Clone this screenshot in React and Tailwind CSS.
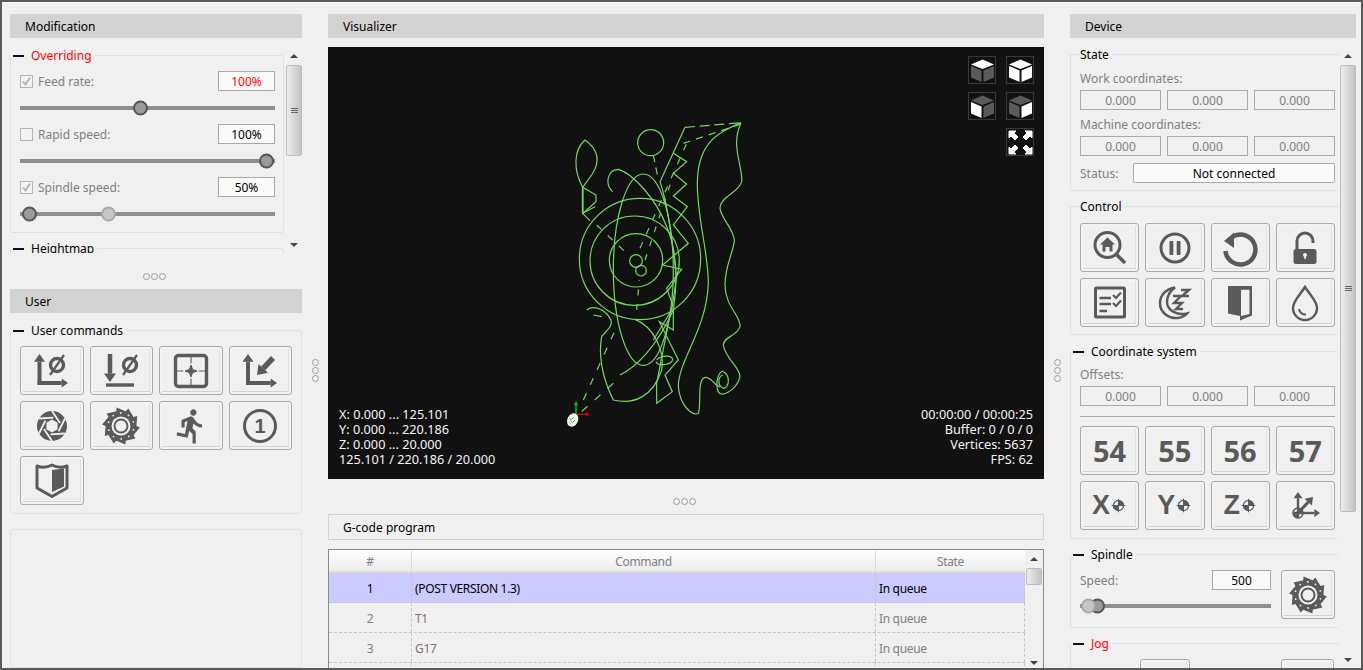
import React from 'react'
import { MdDirectionsRun } from 'react-icons/md'

const G = '#5a5a5a'

// little svg wrapper, 40x40 box centred in the button
const Ic = ({ children }) => (
  <svg width="40" height="40" viewBox="0 0 40 40" fill="none">{children}</svg>
)

const Arrow = ({ x1, y1, x2, y2, w = 4, head = 5.5 }) => {
  const a = Math.atan2(y2 - y1, x2 - x1)
  const bx = x2 - Math.cos(a) * head * 1.4
  const by = y2 - Math.sin(a) * head * 1.4
  const px = -Math.sin(a) * head
  const py = Math.cos(a) * head
  return (
    <g>
      <line x1={x1} y1={y1} x2={bx} y2={by} stroke={G} strokeWidth={w} />
      <polygon points={`${x2},${y2} ${bx + px},${by + py} ${bx - px},${by - py}`} fill={G} />
    </g>
  )
}

const Zero = ({ x, y }) => (
  <g stroke={G} strokeWidth="3.4">
    <circle cx={x} cy={y} r="6.5" />
    <line x1={x - 7} y1={y + 10} x2={x + 7} y2={y - 10} strokeWidth="2.2" />
  </g>
)

const sawPath = () => {
  let d = ''
  for (let i = 0; i < 10; i++) {
    const a = (i * Math.PI) / 5
    const b = a + Math.PI / 5
    const p = (r, t) => `${(20 + r * Math.cos(t)).toFixed(1)} ${(20 + r * Math.sin(t)).toFixed(1)}`
    d += `${i === 0 ? 'M' : 'L'}${p(15.5, a)} L${p(19, a + 0.08)} L${p(15.5, b - 0.05)} `
  }
  return d + 'Z'
}

const Saw = () => (
  <Ic>
    <path d={sawPath()} fill={G} />
    <circle cx="20" cy="20" r="9.5" fill="#f0f0f0" />
    <circle cx="20" cy="20" r="6.5" stroke={G} strokeWidth="2" />
    {[0, 1, 2, 3, 4, 5, 6, 7, 8, 9].map(i => (
      <circle key={i} cx={20 + 13 * Math.cos((i * Math.PI) / 5 + 0.3)} cy={20 + 13 * Math.sin((i * Math.PI) / 5 + 0.3)} r="0.9" fill="#f0f0f0" />
    ))}
  </Ic>
)

const Aperture = () => (
  <Ic>
    <circle cx="20" cy="20" r="15" fill={G} />
    {[0, 60, 120, 180, 240, 300].map(a => (
      <line key={a} x1="20" y1="5" x2="28" y2="17" stroke="#f0f0f0" strokeWidth="1.8" transform={`rotate(${a} 20 20)`} />
    ))}
    <polygon points="20,13.5 25.6,16.7 25.6,23.3 20,26.5 14.4,23.3 14.4,16.7" fill="#f0f0f0" />
  </Ic>
)

const Target = ({ x = 20, y = 20, r = 5 }) => (
  <g>
    <circle cx={x} cy={y} r={r} stroke={G} strokeWidth="1.5" />
    <path d={`M${x} ${y - r} A${r} ${r} 0 0 1 ${x + r} ${y} L${x} ${y} Z M${x} ${y + r} A${r} ${r} 0 0 1 ${x - r} ${y} L${x} ${y} Z`} fill={G} />
    <path d={`M${x - r - 2} ${y} H${x + r + 2} M${x} ${y - r - 2} V${y + r + 2}`} stroke={G} strokeWidth="1.2" />
  </g>
)

const icons = {
  up0: <Ic><Arrow x1={7.5} y1={34} x2={7.5} y2={3} /><Arrow x1={5.5} y1={32} x2={36} y2={32} head={4.5} /><Zero x={25} y={14} /></Ic>,
  down0: <Ic><Arrow x1={9} y1={3} x2={9} y2={31} w={4.5} head={6} /><line x1="5" y1="34" x2="33" y2="34" stroke={G} strokeWidth="3.4" /><Zero x={29} y={14} /></Ic>,
  center: (
    <Ic>
      <rect x="4.5" y="4.5" width="31" height="31" rx="3" stroke={G} strokeWidth="3.4" />
      <path d="M20 5V12.5M20 27.5V35M5 20H12.5M27.5 20H35" stroke={G} strokeWidth="1.1" />
      <polygon points="20,14 21.6,18.4 26,20 21.6,21.6 20,26 18.4,21.6 14,20 18.4,18.4" fill={G} stroke={G} strokeWidth="1" />
    </Ic>
  ),
  axesDiag: <Ic><Arrow x1={8} y1={34} x2={8} y2={3} /><Arrow x1={6} y1={32} x2={37} y2={32} head={4.5} /><Arrow x1={33} y1={7} x2={17} y2={24} w={5.5} head={6.5} /></Ic>,
  aperture: <Aperture />,
  saw: <Saw />,
  run: <MdDirectionsRun size={38} color={G} />,
  one: (
    <Ic>
      <circle cx="20" cy="20" r="15.5" stroke={G} strokeWidth="3" />
      <text x="20" y="27" textAnchor="middle" fontSize="20" fontWeight="700" fontFamily="Liberation Sans" fill={G}>1</text>
    </Ic>
  ),
  shield: (
    <Ic>
      <path d="M5 5Q13 8 20 4Q27 8 35 5V27L20 35.5L5 27Z" stroke={G} strokeWidth="3" strokeLinejoin="round" />
      <path d="M20 9L32 7.5V25.5L20 31Z" fill={G} />
    </Ic>
  ),
  home: (
    <Ic>
      <circle cx="17.5" cy="17" r="12.5" stroke={G} strokeWidth="3" />
      <line x1="27" y1="27" x2="35" y2="35" stroke={G} strokeWidth="3.5" />
      <path d="M17.5 9.5L25 16.5H22.5V23.5H19.5V19H15.5V23.5H12.5V16.5H10Z" fill={G} />
    </Ic>
  ),
  pause: (
    <Ic>
      <circle cx="20" cy="20" r="14" stroke={G} strokeWidth="3" />
      <rect x="14.5" y="13" width="3.8" height="14" rx="1" fill={G} />
      <rect x="21.7" y="13" width="3.8" height="14" rx="1" fill={G} />
    </Ic>
  ),
  reset: (
    <Ic>
      <path d="M13 8.5A15 15 0 1 1 5.5 23" stroke={G} strokeWidth="4.5" />
      <polygon points="4,13 14,4.5 14,20" fill={G} />
    </Ic>
  ),
  lock: (
    <Ic>
      <path d="M12 21V13A8 8 0 0 1 28 13V15" stroke={G} strokeWidth="3" />
      <rect x="8.5" y="21" width="23" height="15" rx="2.5" fill={G} />
      <circle cx="20" cy="27" r="2" fill="#f0f0f0" />
      <rect x="19.2" y="27" width="1.6" height="4" fill="#f0f0f0" />
    </Ic>
  ),
  check: (
    <Ic>
      <rect x="5.5" y="5" width="29" height="29" rx="1" stroke={G} strokeWidth="3" />
      <path d="M9.5 15H21M9.5 21H21M9.5 28H17" stroke={G} strokeWidth="2.4" />
      <path d="M23 12L26 15L31 9.5M23 20L26 23L31 17.5" stroke={G} strokeWidth="2.2" />
    </Ic>
  ),
  sleep: (
    <Ic>
      <path d="M20 4.5C11 6 5 12 5 20C5 29 13 36 23 35C27 34.5 30 33 32 30.5C22 33 12 27 12 19C12 13 15 8 20 4.5Z" fill="none" stroke={G} strokeWidth="2.5" />
      <path d="M18 13H26L19 20H27L21 26H28M26 7H34L27 13H34" stroke={G} strokeWidth="2.4" />
    </Ic>
  ),
  door: (
    <Ic>
      <path d="M8 3H32V32.5L20 37.5V33L8 30.5Z" fill={G} />
      <path d="M21 6.7H29.5V31L21 33Z" fill="#f0f0f0" />
    </Ic>
  ),
  drop: (
    <Ic>
      <path d="M20 4C15 12 8 18 8 25A12 12 0 0 0 32 25C32 18 25 12 20 4Z" stroke={G} strokeWidth="2.4" />
      <path d="M14 26A6.5 6.5 0 0 0 21 31.5" stroke={G} strokeWidth="2" />
    </Ic>
  ),
  xyzAxes: (
    <Ic>
      <Arrow x1={13} y1={32} x2={13} y2={6} w={2.4} head={4.5} />
      <Arrow x1={8} y1={27} x2={35} y2={27} w={2.4} head={4} />
      <Arrow x1={13} y1={27} x2={28} y2={11} w={3} head={5} />
      <circle cx="13" cy="27" r="5" stroke={G} strokeWidth="1.5" />
      <path d="M13 22A5 5 0 0 1 18 27H13ZM13 32A5 5 0 0 1 8 27H13Z" fill={G} />
    </Ic>
  ),
}

const Btn = ({ children, className = '' }) => (
  <button className={`flex items-center justify-center rounded-[3px] border border-[#a9a9a9] bg-[#f0f0f0] shadow-[inset_0_0_0_2px_#f3f3f3,inset_0_-3px_0_#d2d2d2,inset_-3px_0_0_#e0e0e0] ${className}`}>
    {children}
  </button>
)

const Header = ({ children }) => (
  <div className="flex h-6 shrink-0 items-center bg-[#d2d2d2] pt-[2px] pl-[15px] text-black">{children}</div>
)

const Group = ({ title, dash, red, className = '', labelClass = '', children }) => (
  <fieldset className={`rounded-[3px] border border-[#d8e2e8] ${className}`}>
    <legend className={`flex h-4 items-center pt-[2px] pr-[3px] leading-4 ${red ? 'text-[#ff0000]' : 'text-black'} ${labelClass}`}>
      {dash && <span className="mr-[7px] ml-[2px] h-[2px] w-[11px] bg-[#111]" />}
      {title}
    </legend>
    {children}
  </fieldset>
)

const Dots = ({ vertical }) => (
  <div className={`flex gap-[1px] ${vertical ? 'flex-col' : ''}`}>
    <span className="size-[7px] rounded-full border border-[#9c9c9c]" />
    <span className="size-[7px] rounded-full border border-[#9c9c9c]" />
    <span className="size-[7px] rounded-full border border-[#9c9c9c]" />
  </div>
)

const Value = ({ children, className = '' }) => (
  <div className={`flex h-5 items-center justify-center border border-[#a9a9a9] pt-[2px] ${className}`}>{children}</div>
)

const Check = ({ on }) => (
  <span className="flex size-[13px] items-center justify-center border border-[#b4b4b4] bg-[#f3f3f3]">
    {on && (
      <svg width="11" height="11" viewBox="0 0 11 11" fill="none">
        <path d="M2 5.5L4.5 8.5L9 1.5" stroke="#b0b0b0" strokeWidth="1.8" />
      </svg>
    )}
  </span>
)

const Thumb = ({ className = '', light }) => (
  <span className={`absolute top-1/2 size-[15px] -translate-y-1/2 rounded-full border-2 ${light ? 'border-[#a8a8a8] bg-[#c6c6c6]' : 'border-[#555] bg-[#9a9a9a]'} ${className}`} />
)

const Slider = ({ children, className = 'h-[33px]' }) => (
  <div className={`relative flex items-center ${className}`}>
    <div className="h-1 w-full bg-[#8f8f8f]" />
    {children}
  </div>
)

const SliderRow = ({ label, on, value, red }) => (
  <div className="flex h-5 items-center">
    <Check on={on} />
    <span className="ml-[5px] pt-[2px] text-[#808080]">{label}</span>
    <Value className={`ml-auto w-[57px] bg-[#fafafa] ${red ? 'text-[#ff0000]' : 'text-black'}`}>{value}</Value>
  </div>
)

const Grip = () => (
  <div className="flex w-[7px] flex-col gap-[1px]">
    <span className="h-px bg-[#666]" />
    <span className="h-px bg-[#666]" />
    <span className="h-px bg-[#666]" />
  </div>
)

const Scrollbar = ({ thumbClass, grip = true, bottomClass = 'h-[16px]' }) => (
  <div className="flex h-full w-[16px] shrink-0 flex-col">
    <div className="flex h-[18px] shrink-0 items-center justify-center">
      <span className="border-x-[4px] border-b-[4px] border-x-transparent border-b-[#444]" />
    </div>
    <div className={`flex shrink-0 items-center justify-center rounded-[2px] border border-[#bcbcbc] bg-gradient-to-r from-[#ececec] to-[#c4c4c4] ${thumbClass}`}>
      {grip && <Grip />}
    </div>
    <div className="flex-1" />
    <div className={`flex shrink-0 items-center justify-center ${bottomClass}`}>
      <span className="border-x-[4px] border-t-[4px] border-x-transparent border-t-[#444]" />
    </div>
  </div>
)

const Triple = ({ className = '' }) => (
  <div className={`grid grid-cols-3 gap-[6px] text-[#808080] ${className}`}>
    <Value>0.000</Value>
    <Value>0.000</Value>
    <Value>0.000</Value>
  </div>
)

const BigNum = ({ children }) => (
  <span className="font-['Noto_Sans',sans-serif] text-[29px] leading-none font-bold text-[#5a5a5a]">{children}</span>
)

const AxisZero = ({ children }) => (
  <span className="flex items-center">
    <span className="font-['Liberation_Sans',sans-serif] text-[27px] leading-none font-bold text-[#5a5a5a]">{children}</span>
    <svg width="17" height="17" viewBox="10 10 20 20" fill="none"><Target r={6} /></svg>
  </span>
)

// face colours for the four view cube buttons
const Cube = ({ top, left, right }) => (
  <div className="flex size-[28px] items-center justify-center border border-[#3a3a3a]">
    <svg width="25" height="25" viewBox="0 0 25 25">
      <polygon points="12.5,1.5 24,6.5 12.5,11 1,6.5" fill={top} />
      <polygon points="1,8 11.5,12.5 11.5,24 1,19.5" fill={left} />
      <polygon points="24,8 13.5,12.5 13.5,24 24,19.5" fill={right} />
    </svg>
  </div>
)

const Toolpath = () => (
  <svg className="absolute top-[63px] left-[212px]" width="240" height="320" viewBox="0 0 720 960" fill="none" stroke="#74d85e" strokeWidth="3.6">
    <circle cx="300" cy="447" r="182" />
    <circle cx="284" cy="452" r="134" />
    <circle cx="288" cy="451" r="80" />
    <circle cx="288" cy="453" r="19" />
    <circle cx="303" cy="482" r="16" />
    <circle cx="332" cy="98" r="39" />
    <ellipse cx="310" cy="479" rx="90" ry="287" />
    <path d="M128 232C100 180 100 120 135 90C170 115 185 150 155 195L128 232L168 255L168 275L128 310Z" />
    <path d="M128 232V310" strokeWidth="5" />
    <path d="M128 310L165 290M128 310L150 332" />
    <path d="M218 245C195 225 200 180 235 178C280 190 350 270 380 350C410 420 415 500 400 600L400 660L358 635L415 750L375 795L397 845L350 880L350 820L395 590" />
    <path d="M435 52L360 215C385 290 395 390 410 500L395 600L340 690" />
    <path d="M400 130L440 155L400 190L440 222L400 258L442 290L400 345L445 400L368 465L425 478L380 535L400 590" />
    <path d="M603 38C530 70 470 100 472 230C475 340 505 430 505 520C500 660 415 750 415 830C420 890 460 920 475 910C485 880 470 810 495 802C515 800 525 830 540 830" />
    <path d="M435 52L603 38" strokeDasharray="30 14" />
    <path d="M430 100L603 42" strokeDasharray="22 18" />
    <path d="M603 38C570 110 610 170 605 215C595 250 540 260 540 295C545 330 585 360 583 395C575 440 555 470 555 525C555 590 605 620 600 650C590 680 550 680 550 705C555 745 600 770 600 800C590 840 540 870 533 840C525 810 540 780 550 785C570 795 570 830 550 835C530 825 535 800 548 795" />
    <path d="M140 600C160 585 195 595 213 630C220 650 195 665 185 680C175 730 185 800 220 870C280 885 340 860 365 780C375 720 340 650 285 628" />
    <path d="M240 795C290 770 350 710 400 600" />
    <path d="M350 750C365 735 395 735 398 748C395 765 355 770 348 755" />
    <path d="M130 870L228 655" strokeDasharray="22 28" />
    <path d="M125 905L225 815" strokeDasharray="24 28" />
    <path d="M290 600L298 510" strokeDasharray="18 26" />
    <path d="M340 135L352 195" strokeDasharray="22 16" />
    <path d="M300 415L440 100" strokeDasharray="20 26" />
    <path d="M315 450L395 210" strokeDasharray="18 26" />
    <path d="M170 345L260 430" strokeDasharray="20 26" />
    <path d="M160 615L185 620" />
    <line x1="108" y1="912" x2="108" y2="880" stroke="#00d000" strokeWidth="4" />
    <polygon points="108,872 102,886 114,886" fill="#00d000" stroke="none" />
    <line x1="108" y1="913" x2="142" y2="913" stroke="#e00000" strokeWidth="4" />
    <polygon points="150,913 138,907 138,919" fill="#e00000" stroke="none" />
    <ellipse cx="98" cy="930" rx="16" ry="21" transform="rotate(25 98 930)" fill="#f8f8f8" stroke="none" />
    <path d="M92 930L102 922M96 938L106 930" stroke="#35c435" strokeWidth="3" />
    <path d="M88 924L98 940M86 934L94 944" stroke="#777" strokeWidth="2" />
  </svg>
)

const Visualizer = () => (
  <div className="relative h-[432px] shrink-0 overflow-hidden bg-[#111111] text-[12.7px] text-[#f4f4f4]">
    <Toolpath />
    <div className="absolute top-[9px] right-[10px] grid grid-cols-2 gap-x-[10px] gap-y-[8px]">
      <Cube top="#fff" left="#5a5a5a" right="#5a5a5a" />
      <Cube top="#fff" left="#fff" right="#fff" />
      <Cube top="#5a5a5a" left="#fff" right="#5a5a5a" />
      <Cube top="#5a5a5a" left="#5a5a5a" right="#fff" />
      <div />
      <div className="flex size-[28px] items-center justify-center border border-[#3a3a3a]">
        <svg width="25" height="25" viewBox="0 0 25 25" fill="#fff" stroke="#fff">
          <path d="M1 1H8L6 3L10 7L7 10L3 6L1 8Z" />
          <path d="M24 1H17L19 3L15 7L18 10L22 6L24 8Z" />
          <path d="M1 24H8L6 22L10 18L7 15L3 19L1 17Z" />
          <path d="M24 24H17L19 22L15 18L18 15L22 19L24 17Z" />
        </svg>
      </div>
    </div>
    <div className="absolute bottom-[12px] left-[11px] leading-[15px]">
      <div>X: 0.000 ... 125.101</div>
      <div>Y: 0.000 ... 220.186</div>
      <div>Z: 0.000 ... 20.000</div>
      <div>125.101 / 220.186 / 20.000</div>
    </div>
    <div className="absolute right-[11px] bottom-[12px] text-right leading-[15px]">
      <div>00:00:00 / 00:00:25</div>
      <div>Buffer: 0 / 0 / 0</div>
      <div>Vertices: 5637</div>
      <div>FPS: 62</div>
    </div>
  </div>
)

const rows = [
  ['1', '(POST VERSION 1.3)', 'In queue'],
  ['2', 'T1', 'In queue'],
  ['3', 'G17', 'In queue'],
  ['', '', ''],
]

const ProgramTable = () => (
  <div className="mt-[9px] flex min-h-0 flex-1 gap-[1px] overflow-hidden border border-b-0 border-[#8a8a8a] pr-[1px] text-[12px] tracking-[-0.33px]">
    <div className="min-w-0 flex-1">
      <div className="flex h-[23px] border-b-2 border-[#dcdcdc] bg-gradient-to-b from-white to-[#ececec] text-[#808080]">
        <div className="flex w-[83px] items-center justify-center border-r border-[#dcdcdc] pt-[2px]">#</div>
        <div className="flex w-[464px] items-center justify-center border-r border-[#dcdcdc] pt-[2px]">Command</div>
        <div className="flex flex-1 items-center justify-center pt-[2px]">State</div>
      </div>
      {rows.map((r, i) => (
        <div key={i} className={`flex h-[30px] border-b border-dashed border-[#c4c4c4] ${i === 0 ? 'bg-[#cbcbff] text-black' : 'text-[#808080]'}`}>
          <div className="flex w-[83px] items-center justify-center border-r border-dashed border-[#c4c4c4] pt-[2px]">{r[0]}</div>
          <div className={`flex w-[464px] items-center border-r border-dashed border-[#c4c4c4] pt-[2px] pl-[3px] ${i === 0 ? '' : 'text-[#8a6a6a]'}`}>{r[1]}</div>
          <div className="flex flex-1 items-center border-r border-dashed border-[#c4c4c4] pt-[2px] pl-[3px]">{r[2]}</div>
        </div>
      ))}
    </div>
    <Scrollbar thumbClass="h-[17px]" grip={false} bottomClass="h-[10px]" />
  </div>
)

const LeftColumn = () => (
  <div className="flex w-[292px] shrink-0 flex-col">
    <Header>Modification</Header>
    <div className="mt-[9px] flex h-[206px] shrink-0 gap-[2px]">
      <div className="w-[274px] overflow-hidden">
        <Group title="Overriding" dash red labelClass="-ml-[9px]" className="h-[186px] pr-[8px] pl-[9px] pt-[8px]">
          <SliderRow label="Feed rate:" on value="100%" red />
          <Slider><Thumb className="left-[113px]" /></Slider>
          <SliderRow label="Rapid speed:" value="100%" />
          <Slider><Thumb className="right-[1px]" /></Slider>
          <SliderRow label="Spindle speed:" on value="50%" />
          <Slider>
            <Thumb className="left-[2px]" />
            <Thumb light className="left-[81px]" />
          </Slider>
        </Group>
        <Group title="Heightmap" dash className="mt-[7px] h-[60px]" />
      </div>
      <Scrollbar thumbClass="h-[91px]" />
    </div>
    <div className="flex h-[36px] shrink-0 items-center justify-center pt-[10px] pr-[4px]"><Dots /></div>
    <Header>User</Header>
    <Group title="User commands" dash labelClass="-ml-[9px]" className="mt-[9px] h-[192px] shrink-0 px-[9px] pt-[8px]">
      <div className="grid grid-cols-4 gap-[6px]">
        {['up0', 'down0', 'center', 'axesDiag', 'aperture', 'saw', 'run', 'one', 'shield'].map(k => (
          <Btn key={k} className="h-[49px]">{icons[k]}</Btn>
        ))}
      </div>
    </Group>
    <div className="mt-[15px] flex-1 rounded-[3px] border border-[#d8e2e8]" />
  </div>
)

const RightColumn = () => (
  <div className="flex w-[286px] shrink-0 flex-col">
    <Header>Device</Header>
    <div className="mt-[9px] flex min-h-0 flex-1 gap-px">
      <div className="w-[269px] shrink-0 overflow-hidden">
        <Group title="State" className="-mt-px h-[145px] border-r-0 pr-[4px] pl-[9px]">
          <div className="mt-[9px] text-[#808080]">Work coordinates:</div>
          <Triple className="mt-[3px]" />
          <div className="mt-[7px] text-[#808080]">Machine coordinates:</div>
          <Triple className="mt-[3px]" />
          <div className="mt-[7px] flex items-center text-[#808080]">
            <span className="w-[53px] pt-[2px]">Status:</span>
            <Value className="flex-1 rounded-[2px] bg-[#fafafa] text-black">Not connected</Value>
          </div>
        </Group>
        <Group title="Control" className="mt-[7px] h-[137px] border-r-0 pr-[4px] pl-[9px]">
          <div className="mt-[9px] grid grid-cols-4 gap-[6px]">
            {['home', 'pause', 'reset', 'lock', 'check', 'sleep', 'door', 'drop'].map(k => (
              <Btn key={k} className="h-[49px]">{icons[k]}</Btn>
            ))}
          </div>
        </Group>
        <Group title="Coordinate system" dash labelClass="-ml-[9px]" className="mt-[8px] h-[196px] border-r-0 pr-[4px] pl-[9px]">
          <div className="mt-[8px] text-[#808080]">Offsets:</div>
          <Triple className="mt-[3px]" />
          <div className="mt-[10px] h-px bg-[#a8a8a8]" />
          <div className="mt-[9px] grid grid-cols-4 gap-[6px]">
            {['54', '55', '56', '57'].map(n => (
              <Btn key={n} className="h-[49px]"><BigNum>{n}</BigNum></Btn>
            ))}
            {['X', 'Y', 'Z'].map(n => (
              <Btn key={n} className="h-[49px]"><AxisZero>{n}</AxisZero></Btn>
            ))}
            <Btn className="h-[49px]">{icons.xyzAxes}</Btn>
          </div>
        </Group>
        <Group title="Spindle" dash labelClass="-ml-[9px]" className="mt-[7px] h-[82px] border-r-0 pr-[4px] pl-[9px]">
          <div className="mt-[8px] flex gap-[10px]">
            <div className="flex-1">
              <div className="flex h-5 items-center justify-between text-[#808080]">
                <span className="pt-[2px]">Speed:</span>
                <Value className="w-[59px] bg-[#fafafa] text-black">500</Value>
              </div>
              <Slider className="h-[31px]">
                <Thumb className="left-[10px]" />
                <Thumb light className="left-[1px]" />
              </Slider>
            </div>
            <Btn className="h-[49px] w-[54px]">{icons.saw}</Btn>
          </div>
        </Group>
        <Group title="Jog" dash red labelClass="-ml-[9px]" className="mt-[7px] h-[60px] border-r-0 pr-[4px] pl-[9px]">
          <div className="mt-[8px] flex">
            <Btn className="ml-[60px] h-[40px] w-[50px]" />
            <Btn className="ml-[91px] h-[40px] w-[53px]" />
          </div>
        </Group>
      </div>
      <Scrollbar thumbClass="h-[447px]" />
    </div>
  </div>
)

export default function App() {
  return (
    <div className="h-[670px] w-[1363px] overflow-hidden border-2 border-[#5a5a5a] bg-[#f0f0f0] font-['Noto_Sans','Liberation_Sans',sans-serif] text-[12px] leading-4">
      <div className="flex h-[666px] border-t border-[#fafafa] pt-[11px] pl-[8px]">
        <LeftColumn />
        <div className="flex w-[26px] shrink-0 items-center justify-center pt-[58px]"><Dots vertical /></div>
        <div className="flex w-[716px] shrink-0 flex-col">
          <Header>Visualizer</Header>
          <div className="mt-[9px] flex min-h-0 flex-1 flex-col">
            <Visualizer />
            <div className="flex h-[35px] shrink-0 items-center justify-center pt-[9px] pr-[4px]"><Dots /></div>
            <div className="flex h-[26px] shrink-0 items-center border border-[#d2d2d2] pt-[2px] pl-[14px] text-black">G-code program</div>
            <ProgramTable />
          </div>
        </div>
        <div className="flex w-[26px] shrink-0 items-center justify-center pt-[58px]"><Dots vertical /></div>
        <RightColumn />
      </div>
    </div>
  )
}
